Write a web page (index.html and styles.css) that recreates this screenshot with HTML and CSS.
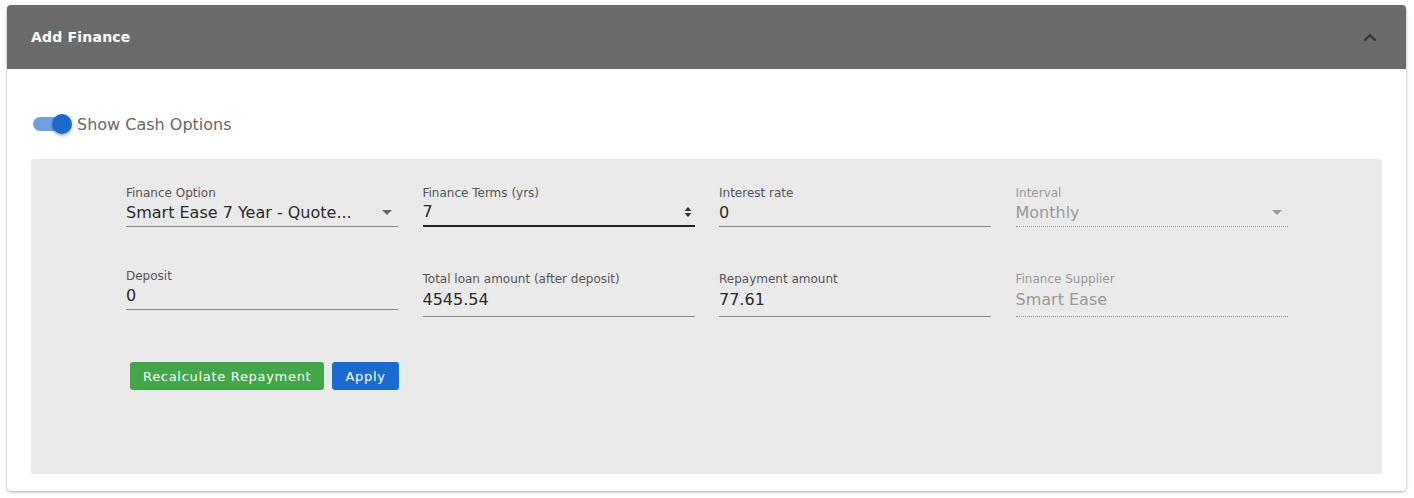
FILE: index.html
```html
<!DOCTYPE html>
<html>
<head>
<meta charset="utf-8">
<link rel="stylesheet" href="styles.css">
</head>
<body>
<div class="card">
  <div class="card-header">
    <span class="title">Add Finance</span>
    <svg class="chev" width="14" height="9" viewBox="0 0 14 9"><path d="M1.5 7.5 L7 2 L12.5 7.5" fill="none" stroke="#333" stroke-width="2"/></svg>
  </div>
  <div class="card-body">
    <div class="toggle-row">
      <span class="switch"><span class="track"></span><span class="knob"></span></span>
      <span class="toggle-label">Show Cash Options</span>
    </div>
    <div class="panel">
      <div class="grid">
        <div class="field">
          <label>Finance Option</label>
          <div class="control select"><span class="val">Smart Ease 7 Year - Quote...</span><span class="caret"></span></div>
        </div>
        <div class="field">
          <label>Finance Terms (yrs)</label>
          <div class="control focus"><span class="val">7</span>
            <svg class="spin" width="8" height="12" viewBox="0 0 8 12"><path d="M4 1 L7.5 5 L0.5 5Z M0.5 7 L7.5 7 L4 11Z" fill="#333"/></svg>
          </div>
        </div>
        <div class="field">
          <label>Interest rate</label>
          <div class="control"><span class="val">0</span></div>
        </div>
        <div class="field disabled">
          <label>Interval</label>
          <div class="control select dotted"><span class="val">Monthly</span><span class="caret"></span></div>
        </div>
        <div class="field short">
          <label>Deposit</label>
          <div class="control"><span class="val">0</span></div>
        </div>
        <div class="field tall">
          <label>Total loan amount (after deposit)</label>
          <div class="control"><span class="val">4545.54</span></div>
        </div>
        <div class="field tall">
          <label>Repayment amount</label>
          <div class="control"><span class="val">77.61</span></div>
        </div>
        <div class="field tall disabled">
          <label>Finance Supplier</label>
          <div class="control dotted"><span class="val">Smart Ease</span></div>
        </div>
      </div>
      <div class="buttons">
        <button class="btn green">Recalculate Repayment</button>
        <button class="btn blue">Apply</button>
      </div>
    </div>
  </div>
</div>
</body>
</html>
```
FILE: styles.css
```css
html, body { margin: 0; padding: 0; background: #fff; }
body { font-family: "DejaVu Sans", "Open Sans", sans-serif; padding: 5px 8px 7px 7px; }
.card {
  background: #fff;
  border-radius: 4px;
  box-shadow: 0 1px 3px rgba(0,0,0,0.35);
  width: 1399px;
  height: 486px;
  overflow: hidden;
}
.card-header {
  height: 64px;
  background: #6b6b6b;
  display: flex;
  align-items: center;
  justify-content: space-between;
  padding: 0 29px 0 24px;
  box-sizing: border-box;
}
.title { color: #fff; font-weight: bold; font-size: 14px; letter-spacing: 0.2px; }
.chev { display: block; }
.card-body { padding: 40px 24px 0 24px; }
.toggle-row { display: flex; align-items: center; height: 30px; margin-bottom: 20px; }
.switch { position: relative; width: 40px; height: 24px; margin-left: 2px; margin-right: 4px; }
.track { position: absolute; left: 0; top: 5px; width: 36px; height: 14px; border-radius: 7px; background: #6fa1e1; }
.knob { position: absolute; left: 19px; top: 2px; width: 20px; height: 20px; border-radius: 50%; background: #1a6bcc; box-shadow: 0 2px 3px rgba(0,0,0,0.3); }
.toggle-label { font-size: 16px; color: #666; }
.panel {
  background: #eaeaea;
  border-radius: 3px;
  height: 315px;
  padding: 27px 96px 0 95px;
  box-sizing: border-box;
}
.grid { display: grid; grid-template-columns: repeat(4, 272px); column-gap: 24.5px; row-gap: 42px; align-items: start; }
.field label { display: block; font-size: 12px; color: #555; line-height: 14px; }
.control { display: flex; align-items: center; justify-content: space-between; border-bottom: 1px solid #8a8a8a; height: 27px; box-sizing: border-box; padding-bottom: 2px; }
.control .val { font-size: 16px; color: #2a2a2a; }
.control.focus { border-bottom: 2px solid #222; }
.field.tall label { margin-top: 3px; }
.field.tall .control { height: 31px; padding-bottom: 4px; }
.caret { width: 0; height: 0; border-left: 5px solid transparent; border-right: 5px solid transparent; border-top: 5px solid #666; margin-right: 6px; }
.spin { margin-right: 3px; }
.disabled label, .disabled .val { color: #999 !important; }
.control.dotted { border-bottom: 1px dotted #999; }
.disabled .caret { border-top-color: #999; }
.buttons { display: flex; gap: 8px; margin-top: 45px; margin-left: 4px; }
.btn { font-family: inherit; border: none; border-radius: 3px; color: #fff; font-size: 13px; letter-spacing: 0.7px; height: 28px; padding: 0 13px; }
.green { background: #43a648; }
.blue { background: #1a6bcc; }
```
